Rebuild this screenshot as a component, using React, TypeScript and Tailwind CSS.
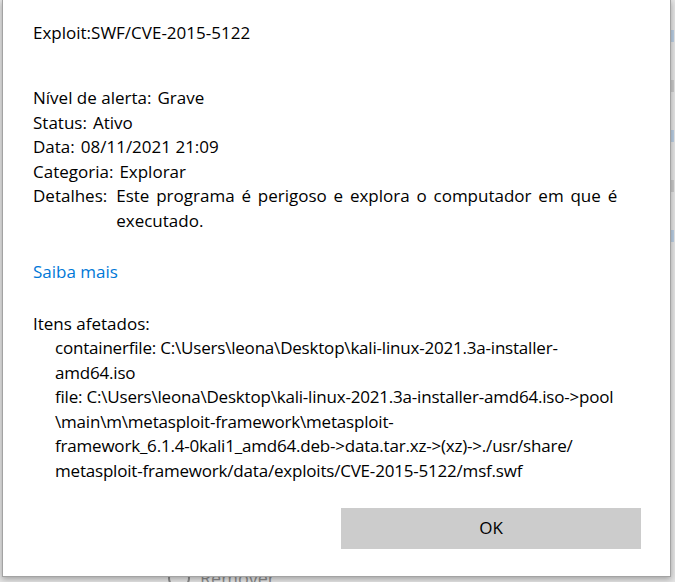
import React from "react";

const facts = [
  ["Nível de alerta:", "Grave"],
  ["Status:", "Ativo"],
  ["Data:", "08/11/2021 21:09"],
  ["Categoria:", "Explorar"],
] as const;

export default function App() {
  return (
    <div
      className="relative h-[582px] w-[675px] overflow-hidden bg-[#e4e4e4] text-black"
      style={{ fontFamily: '"Open Sans", "Noto Sans", sans-serif' }}
    >
      {/* window behind the dialog */}
      <div className="absolute left-[168px] top-[566px] flex items-center gap-[10px] text-[18px] leading-[24px] text-[#8a8a8a]">
        <span className="h-[22px] w-[22px] rounded-full border-2 border-[#8a8a8a]" />
        <span>Remover</span>
      </div>
      <div className="absolute right-0 top-[30px] flex w-[4px] flex-col gap-[38px]">
        <span className="h-[12px] w-[3px] bg-[#b9cde2]" />
        <span className="h-[12px] w-[3px] bg-[#c9c9c9]" />
        <span className="h-[12px] w-[3px] bg-[#b9cde2]" />
        <span className="h-[12px] w-[3px] bg-[#c9c9c9]" />
        <span className="h-[12px] w-[3px] bg-[#b9cde2]" />
      </div>

      <div className="relative z-10 ml-[2px] flex h-[577px] w-[669px] flex-col border-x border-b border-[#a3a3a3] bg-white pl-[30px] pt-[21px] text-[17px] leading-[24.5px] shadow-[0_2px_6px_rgba(0,0,0,0.3)]">
        <p>Exploit:SWF/CVE-2015-5122</p>

        <dl className="mt-[40.5px]">
          {facts.map(([label, value]) => (
            <div className="flex gap-[6px]" key={label}>
              <dt>{label}</dt>
              <dd>{value}</dd>
            </div>
          ))}
          <div className="flex gap-[9px]">
            <dt>Detalhes:</dt>
            <dd className="[word-spacing:2.4px]">
              Este programa é perigoso e explora o computador em que é
              <br />
              executado.
            </dd>
          </div>
        </dl>

        <a className="mt-[27px] w-fit text-[#0078d7]" href="#">
          Saiba mais
        </a>

        <p className="mt-[27px]">Itens afetados:</p>
        <div className="pl-[22px] tracking-[-0.2px]">
          <p>
            containerfile: C:\Users\leona\Desktop\kali-linux-2021.3a-installer-
            <br />
            amd64.iso
          </p>
          <p>
            file: C:\Users\leona\Desktop\kali-linux-2021.3a-installer-amd64.iso-&gt;pool
            <br />
            \main\m\metasploit-framework\metasploit-
            <br />
            framework_6.1.4-0kali1_amd64.deb-&gt;data.tar.xz-&gt;(xz)-&gt;./usr/share/
            <br />
            metasploit-framework/data/exploits/CVE-2015-5122/msf.swf
          </p>
        </div>

        <button className="ml-[308px] mt-[25px] h-[41px] w-[300px] bg-[#cccccc] text-[17px]">
          OK
        </button>
      </div>
    </div>
  );
}
